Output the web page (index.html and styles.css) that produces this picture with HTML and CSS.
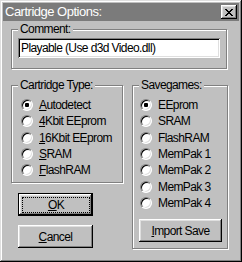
FILE: index.html
```html
<!DOCTYPE html>
<html lang="en">
<head>
    <meta charset="UTF-8">
    <title>Cartridge Options</title>
    <link rel="stylesheet" href="styles.css">
</head>
<body>
    <div class="window">
        <div class="titlebar">
            <span class="title">Cartridge Options:</span>
            <button class="close" type="button">
                <svg width="8" height="7" viewBox="0 0 8 7" shape-rendering="crispEdges">
                    <path d="M0 0h2v1H0zM6 0h2v1H6zM1 1h2v1H1zM5 1h2v1H5zM2 2h4v1H2zM3 3h2v1H3zM2 4h4v1H2zM1 5h2v1H1zM5 5h2v1H5zM0 6h2v1H0zM6 6h2v1H6z" fill="#000"/>
                </svg>
            </button>
        </div>
        <div class="content">
            <fieldset class="group comment-group">
                <legend>Comment:</legend>
                <input class="field" type="text" value="Playable (Use d3d Video.dll)">
            </fieldset>
            <div class="columns">
                <div class="left-col">
                    <fieldset class="group type-group">
                        <legend>Cartridge Type:</legend>
                        <div class="options type-options">
                            <label class="option"><span class="mark checked"></span><span><u>A</u>utodetect</span></label>
                            <label class="option"><span class="mark"></span><span><u>4</u>Kbit EEprom</span></label>
                            <label class="option"><span class="mark"></span><span><u>1</u>6Kbit EEprom</span></label>
                            <label class="option"><span class="mark"></span><span><u>S</u>RAM</span></label>
                            <label class="option"><span class="mark"></span><span><u>F</u>lashRAM</span></label>
                        </div>
                    </fieldset>
                    <div class="buttons">
                        <button class="btn default" type="button"><span class="focus"><u>O</u>K</span></button>
                        <button class="btn" type="button"><u>C</u>ancel</button>
                    </div>
                </div>
                <fieldset class="group save-group">
                    <legend>Savegames:</legend>
                    <div class="options save-options">
                        <label class="option"><span class="mark checked"></span><span>EEprom</span></label>
                        <label class="option"><span class="mark"></span><span>SRAM</span></label>
                        <label class="option"><span class="mark"></span><span>FlashRAM</span></label>
                        <label class="option"><span class="mark"></span><span>MemPak 1</span></label>
                        <label class="option"><span class="mark"></span><span>MemPak 2</span></label>
                        <label class="option"><span class="mark"></span><span>MemPak 3</span></label>
                        <label class="option"><span class="mark"></span><span>MemPak 4</span></label>
                    </div>
                    <button class="btn import" type="button"><u>I</u>mport Save</button>
                </fieldset>
            </div>
        </div>
    </div>
</body>
</html>
```

FILE: styles.css
```css
body {
    margin: 0;
    font-family: "Liberation Sans", Arial, sans-serif;
    font-size: 12px;
    letter-spacing: -0.6px;
    color: #000;
    background-color: #c0c0c0;
}

.window {
    width: 242px;
    height: 262px;
    box-sizing: border-box;
    padding: 3px;
    background-color: #c0c0c0;
    box-shadow: inset -1px -1px #000, inset 1px 1px #dfdfdf, inset -2px -2px #808080, inset 2px 2px #fff;
}

.titlebar {
    height: 18px;
    padding: 0 2px;
    background-color: #7b7b7b;
    color: #fff;
    display: flex;
    align-items: center;
    justify-content: space-between;
}
.title {
    font-size: 13px;
    line-height: 18px;
    letter-spacing: -0.5px;
}
.close {
    width: 16px;
    height: 14px;
    padding: 0;
    border: none;
    background-color: #c0c0c0;
    box-shadow: inset -1px -1px #000, inset 1px 1px #fff, inset -2px -2px #808080, inset 2px 2px #dfdfdf;
    display: flex;
    align-items: center;
    justify-content: center;
}
.close svg {
    display: block;
}

.content {
    padding: 2px 0 0 8px;
}

.group {
    margin: 0;
    padding: 2px 6px 0 6px;
    min-width: 0;
    box-sizing: border-box;
    border: 1px solid #808080;
    box-shadow: 1px 1px 0 #fff, inset 1px 1px 0 #fff;
}
.group legend {
    padding: 0 2px;
    line-height: 13px;
    background-color: #c0c0c0;
}

.comment-group {
    width: 216px;
    height: 46px;
}
.field {
    display: block;
    width: 202px;
    height: 20px;
    box-sizing: border-box;
    padding: 0 3px;
    border: none;
    outline: none;
    font: inherit;
    letter-spacing: inherit;
    color: #000;
    background-color: #fff;
    box-shadow: inset 1px 1px #808080, inset -1px -1px #fff, inset 2px 2px #000, inset -2px -2px #dfdfdf;
}

.columns {
    display: flex;
    gap: 9px;
    margin-top: 10px;
}
.left-col {
    width: 112px;
    display: flex;
    flex-direction: column;
}
.type-group {
    width: 112px;
    height: 104px;
}
.save-group {
    width: 96px;
    height: 170px;
}

.options {
    display: flex;
    flex-direction: column;
    padding-top: 3px;
}
.type-options {
    padding-left: 3px;
}
.save-options {
    padding-left: 1px;
}
.option {
    height: 16.33px;
    line-height: 14px;
    display: flex;
    align-items: center;
    gap: 6px;
    white-space: nowrap;
}
.mark {
    position: relative;
    width: 12px;
    height: 12px;
    flex: none;
    box-sizing: border-box;
    border-radius: 50%;
    border: 1px solid;
    border-color: #808080 #fff #fff #808080;
    background-color: #fff;
    box-shadow: inset 1px 1px #000, inset -1px -1px #dfdfdf;
}
.mark.checked::after {
    content: "";
    position: absolute;
    left: 3px;
    top: 3px;
    width: 4px;
    height: 4px;
    border-radius: 1px;
    background-color: #000;
}

.buttons {
    display: flex;
    flex-direction: column;
    gap: 9px;
    margin-top: 10px;
    padding-left: 7px;
}
.btn {
    width: 75px;
    height: 23px;
    padding: 0;
    border: none;
    font: inherit;
    letter-spacing: inherit;
    color: #000;
    background-color: #c0c0c0;
    box-shadow: inset -1px -1px #000, inset 1px 1px #fff, inset -2px -2px #808080, inset 2px 2px #dfdfdf;
    display: flex;
    align-items: center;
    justify-content: center;
}
.btn.default {
    align-items: stretch;
    box-shadow: inset 0 0 0 1px #000, inset -2px -2px #000, inset 2px 2px #fff, inset -3px -3px #808080, inset 3px 3px #dfdfdf;
}
.focus {
    flex: 1;
    margin: 4px 3px 3px 4px;
    border: 1px dotted #000;
    display: flex;
    align-items: center;
    justify-content: center;
}
.btn.import {
    width: 83px;
    margin-top: 8px;
}
```
